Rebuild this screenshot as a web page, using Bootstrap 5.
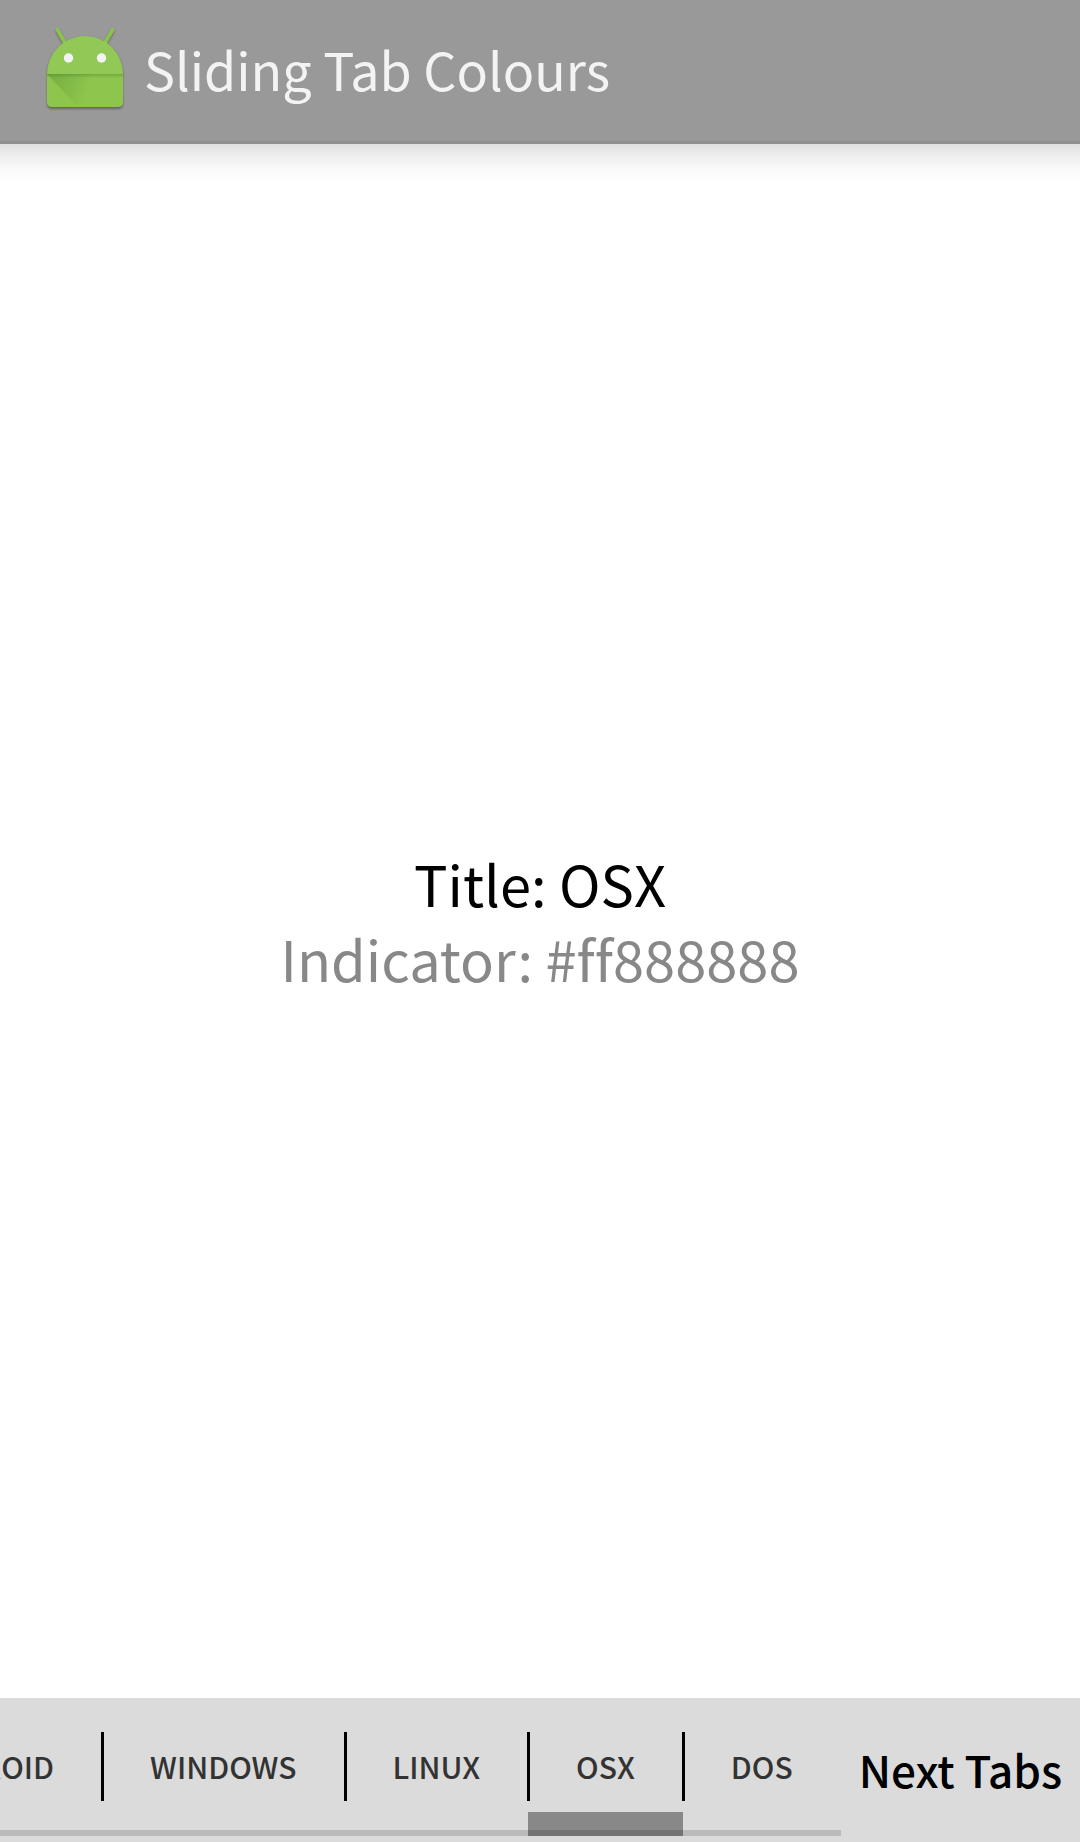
<!DOCTYPE html>
<html lang="en">
<head>
<meta charset="utf-8">
<meta name="viewport" content="width=device-width, initial-scale=1">
<title>Sliding Tab Colours</title>
<link href="https://cdn.jsdelivr.net/npm/bootstrap@5.3.0/dist/css/bootstrap.min.css" rel="stylesheet">
<style>
  body { font-family: "Noto Sans CJK SC", "Noto Sans", sans-serif; font-variant-ligatures: none; color: #000; }
  .action-bar { height: 144px; padding: 0 36px 4px; background: #999; border-bottom: 3px solid #8f8f8f; }
  .app-icon { width: 96px; height: 96px; margin-bottom: 8px; }
  .app-title { font-size: 52px; line-height: 72px; color: #f3f3f3; }
  .pager { padding-bottom: 2px; background: linear-gradient(#dfdfdf, #eee 12px, #fafafa 26px, #fff 38px); }
  .pager p { font-size: 56px; line-height: 75px; }
  .indicator-text { color: #888; }
  .tab-bar { height: 144px; background: #dbdbdb; }
  .tab-strip { height: 138px; }
  .tab-strip::after { content: ""; position: absolute; inset: auto 0 0 0; height: 6px; background: rgba(0, 0, 0, .15); }
  .tab-link { padding: 0 48px 2px; font-size: 30px; line-height: 45px; font-weight: 500; color: #333; text-decoration: none; }
  .tab-link.active { box-shadow: inset 0 -24px #888; }
  .tab-link + .tab-link::before { content: ""; position: absolute; left: -1px; top: 34px; width: 3px; height: 69px; background: #000; }
  .next-tabs { padding: 0 18px 2px; font-size: 44px; line-height: 60px; font-weight: 500; color: #000; }
</style>
</head>
<body class="d-flex flex-column min-vh-100 bg-white">
<header class="action-bar d-flex align-items-center flex-shrink-0">
  <svg class="app-icon flex-shrink-0" viewBox="0 0 96 96" aria-hidden="true">
    <defs>
      <linearGradient id="fold" x1="11" y1="58" x2="52" y2="74" gradientUnits="userSpaceOnUse">
        <stop offset="0" stop-color="#33691e" stop-opacity=".26"/>
        <stop offset="1" stop-color="#33691e" stop-opacity="0"/>
      </linearGradient>
      <linearGradient id="crease" x1="0" y1="0" x2="0" y2="1">
        <stop offset="0" stop-color="#33691e" stop-opacity=".3"/>
        <stop offset="1" stop-color="#33691e" stop-opacity="0"/>
      </linearGradient>
      <filter id="soft"><feGaussianBlur stdDeviation="0.8"/></filter>
    </defs>
    <g fill="#444" stroke="#444" opacity=".6" filter="url(#soft)" transform="translate(0 1)">
      <path stroke="none" d="M11 57a38 38 0 0 1 76 0v29q0 5-5 5H16q-5 0-5-5z"/>
      <path d="M21.500 13.500l8.500 14.500M76.500 13.500l-8.500 14.500" stroke-width="3.500" stroke-linecap="round"/>
    </g>
    <path d="M21.500 13l8.500 14.500M76.500 13l-8.500 14.500" stroke="#8bc34a" stroke-width="3.800" stroke-linecap="round"/>
    <path fill="#92c956" d="M11 57a38 38 0 0 1 76 0z"/>
    <path fill="#8dc54d" d="M11 57h76v28q0 5-5 5H16q-5 0-5-5z"/>
    <path fill="url(#fold)" d="M11 57h76v33H42z"/>
    <path fill="url(#crease)" d="M11 57h76v4H11z"/>
    <circle cx="32.500" cy="41" r="4.700" fill="#f3f3f3"/>
    <circle cx="65.500" cy="41" r="4.700" fill="#f3f3f3"/>
  </svg>
  <h1 class="app-title fw-normal text-nowrap mb-0 ms-2 ps-1">Sliding Tab Colours</h1>
</header>
<main class="pager flex-grow-1 d-flex flex-column justify-content-center text-center">
  <p class="mb-0">Title: OSX</p>
  <p class="indicator-text mb-0">Indicator: #ff888888</p>
</main>
<footer class="tab-bar d-flex flex-shrink-0">
  <nav class="tab-strip position-relative d-flex justify-content-end flex-grow-1 overflow-hidden" aria-label="Tabs">
    <a class="tab-link position-relative d-flex align-items-center" href="#android">ANDROID</a>
    <a class="tab-link position-relative d-flex align-items-center" href="#windows">WINDOWS</a>
    <a class="tab-link position-relative d-flex align-items-center" href="#linux">LINUX</a>
    <a class="tab-link position-relative d-flex align-items-center active" href="#osx" aria-current="page">OSX</a>
    <a class="tab-link position-relative d-flex align-items-center" href="#dos">DOS</a>
  </nav>
  <button type="button" class="next-tabs border-0 bg-transparent text-nowrap flex-shrink-0">Next Tabs</button>
</footer>
<script src="https://cdn.jsdelivr.net/npm/bootstrap@5.3.0/dist/js/bootstrap.bundle.min.js"></script>
</body>
</html>
